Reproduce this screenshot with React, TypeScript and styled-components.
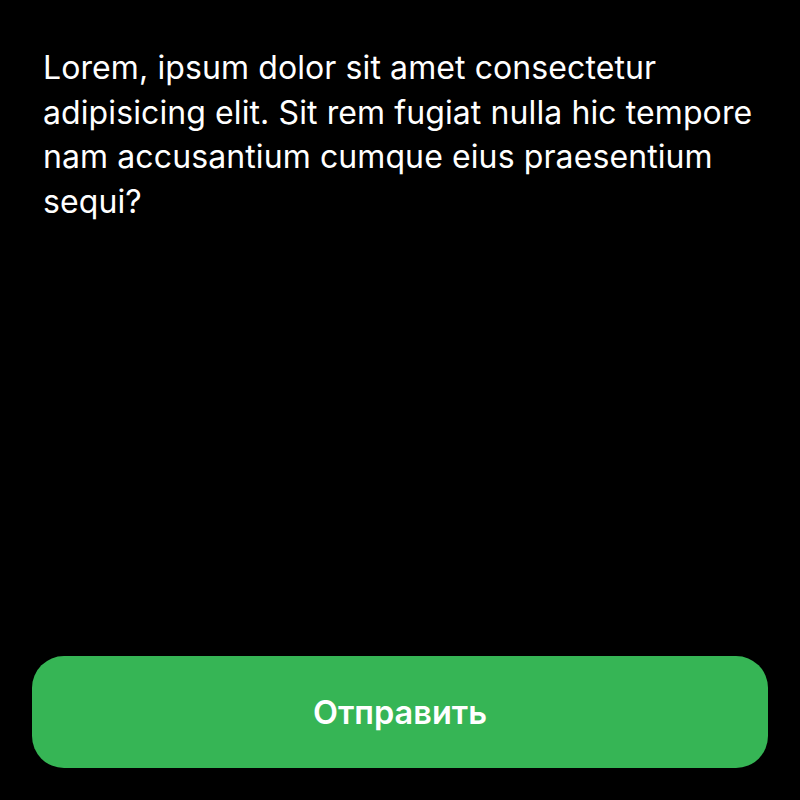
import React from "react";
import styled, { createGlobalStyle } from "styled-components";

const Global = createGlobalStyle`
  html, body { margin: 0; padding: 0; background: #000; }
  * { box-sizing: border-box; }
`;

const Screen = styled.div`
  width: 800px;
  height: 800px;
  background: #000;
  display: flex;
  flex-direction: column;
  justify-content: space-between;
  padding: 32px;
  font-family: Inter, "Noto Sans", sans-serif;
`;

const Message = styled.p`
  margin: 0;
  padding: 14px 8px 0 11px;
  color: #fff;
  font-size: 32px;
  line-height: 44.6px;
  font-weight: 400;
  letter-spacing: 0.1px;
`;

const SubmitButton = styled.button`
  width: 100%;
  height: 112px;
  border: none;
  border-radius: 32px;
  background: #36b555;
  color: #fff;
  font-family: Inter, "Noto Sans", sans-serif;
  font-size: 32.5px;
  font-weight: 600;
  display: flex;
  align-items: center;
  justify-content: center;
  cursor: pointer;
`;

export default function App() {
  return (
    <>
      <Global />
      <Screen>
        <Message>
          Lorem, ipsum dolor sit amet consectetur adipisicing elit. Sit rem fugiat nulla hic tempore nam accusantium cumque eius praesentium sequi?
        </Message>
        <SubmitButton>Отправить</SubmitButton>
      </Screen>
    </>
  );
}
